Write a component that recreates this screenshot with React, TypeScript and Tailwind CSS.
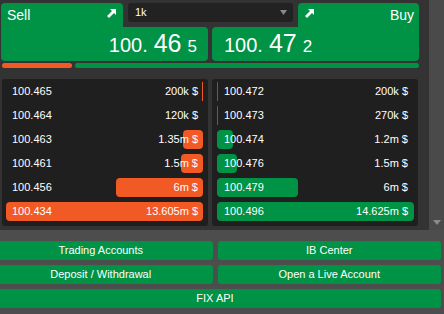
import React from 'react'

type Level = { price: string; amount: string; value: number }

const bids: Level[] = [
  { price: '100.465', amount: '200k $', value: 0.2 },
  { price: '100.464', amount: '120k $', value: 0.12 },
  { price: '100.463', amount: '1.35m $', value: 1.35 },
  { price: '100.461', amount: '1.5m $', value: 1.5 },
  { price: '100.456', amount: '6m $', value: 6 },
  { price: '100.434', amount: '13.605m $', value: 13.605 },
]

const asks: Level[] = [
  { price: '100.472', amount: '200k $', value: 0.2 },
  { price: '100.473', amount: '270k $', value: 0.27 },
  { price: '100.474', amount: '1.2m $', value: 1.2 },
  { price: '100.476', amount: '1.5m $', value: 1.5 },
  { price: '100.479', amount: '6m $', value: 6 },
  { price: '100.496', amount: '14.625m $', value: 14.625 },
]

function Arrow() {
  return (
    <svg width="12" height="12" viewBox="0 0 12 12">
      <path d="M5 1h6v6l-2-2-5 5-2-2 5-5z" fill="white" />
    </svg>
  )
}

function Price({ big, pip }: { big: string; pip: string }) {
  return (
    <div className="flex items-baseline leading-none">
      <span className="text-[20px]">100.</span>
      <span className="ml-[6px] text-[25px]">{big}</span>
      <span className="ml-[6px] text-[17px]">{pip}</span>
    </div>
  )
}

function BookSide({ levels, side }: { levels: Level[]; side: 'bid' | 'ask' }) {
  const max = Math.max(...levels.map((l) => l.value))
  const isBid = side === 'bid'
  return (
    <div
      className={
        'flex w-[206px] flex-col gap-[5px] rounded-[3px] bg-[#1f1f1f] pt-[3px] pb-[5px] ' +
        (isBid ? 'pl-[4px] pr-[5px]' : 'pl-[5px] pr-[4px]')
      }
    >
      {levels.map((l) => {
        const w = Math.max(1, Math.round((l.value / max) * 197))
        return (
          <div key={l.price} className="relative h-[19px] text-[11px]">
            {l.value >= 0.15 && (
              <div
                className={
                  'absolute top-0 h-[19px] ' +
                  (isBid ? 'right-0 bg-[#f15a24] ' : 'left-0 bg-[#009245] ') +
                  (w > 4 ? 'rounded-[4px]' : '')
                }
                style={{ width: w > 4 ? w : 1 }}
              />
            )}
            <div
              className={
                'relative flex h-full items-center justify-between ' +
                (isBid ? 'pl-[6px] pr-[5px]' : 'pl-[7px] pr-[6px]')
              }
            >
              <span>{l.price}</span>
              <span>{l.amount}</span>
            </div>
          </div>
        )
      })}
    </div>
  )
}

export default function App() {
  return (
    <div className="h-[314px] w-[444px] overflow-hidden bg-[#4d4d4d] font-['Liberation_Sans',Arial,sans-serif] text-white">
      <div className="flex h-[230px]">
        <div className="w-[429px] bg-[#333333] pt-[3px] pl-[1px]">
          {/* tabs */}
          <div className="flex h-[24px]">
            <div className="flex w-[122px] items-start justify-between rounded-t-[4px] bg-[#009245] pt-[5px] pr-[6px] pl-[6px]">
              <span className="text-[14px] leading-[14px]">Sell</span>
              <Arrow />
            </div>
            <div className="ml-[5px] flex h-[19px] w-[165px] items-center justify-between rounded-[3px] bg-[#222222] pr-[6px] pl-[7px]">
              <span className="text-[11px]">1k</span>
              <svg width="7" height="5" viewBox="0 0 7 5">
                <path d="M0 0h7L3.5 5z" fill="#8a8a8a" />
              </svg>
            </div>
            <div className="ml-[5px] flex w-[121px] items-start justify-between rounded-t-[4px] bg-[#009245] pt-[5px] pr-[5px] pl-[5px]">
              <Arrow />
              <span className="text-[14px] leading-[14px]">Buy</span>
            </div>
          </div>
          {/* prices */}
          <div className="flex h-[34px] gap-[4px]">
            <div className="flex w-[207px] items-end justify-end rounded-b-[4px] rounded-tr-[4px] bg-[#009245] pr-[11px] pb-[5px]">
              <Price big="46" pip="5" />
            </div>
            <div className="flex w-[207px] items-end justify-start rounded-b-[4px] rounded-tl-[4px] bg-[#009245] pl-[12px] pb-[5px]">
              <Price big="47" pip="2" />
            </div>
          </div>
          {/* spread bar */}
          <div className="mt-[2px] ml-[1px] flex h-[5px] w-[417px] gap-[3px]">
            <div className="w-[70px] rounded-[3px] bg-[#f15a24]" />
            <div className="flex-1 rounded-[3px] bg-[#009245]" />
          </div>
          {/* book */}
          <div className="mt-[11px] ml-[1px] flex gap-[4px]">
            <BookSide levels={bids} side="bid" />
            <BookSide levels={asks} side="ask" />
          </div>
        </div>
        <div className="flex w-[15px] flex-col items-center justify-end bg-[#4a4a4a] pb-[5px]">
          <svg width="8" height="5" viewBox="0 0 8 5">
            <path d="M0 0h8L4 5z" fill="#8a8a8a" />
          </svg>
        </div>
      </div>
      <div className="pt-[11px]">
        <div className="-ml-[11px] grid w-[452px] grid-cols-2 gap-[5px] text-[11px]">
          <div className="flex h-[19px] items-center justify-center rounded-[3px] bg-[#009245]">Trading Accounts</div>
          <div className="flex h-[19px] items-center justify-center rounded-[3px] bg-[#009245]">IB Center</div>
          <div className="flex h-[19px] items-center justify-center rounded-[3px] bg-[#009245]">Deposit / Withdrawal</div>
          <div className="flex h-[19px] items-center justify-center rounded-[3px] bg-[#009245]">Open a Live Account</div>
          <div className="col-span-2 flex h-[19px] items-center justify-center rounded-[3px] bg-[#009245]">FIX API</div>
        </div>
      </div>
    </div>
  )
}
